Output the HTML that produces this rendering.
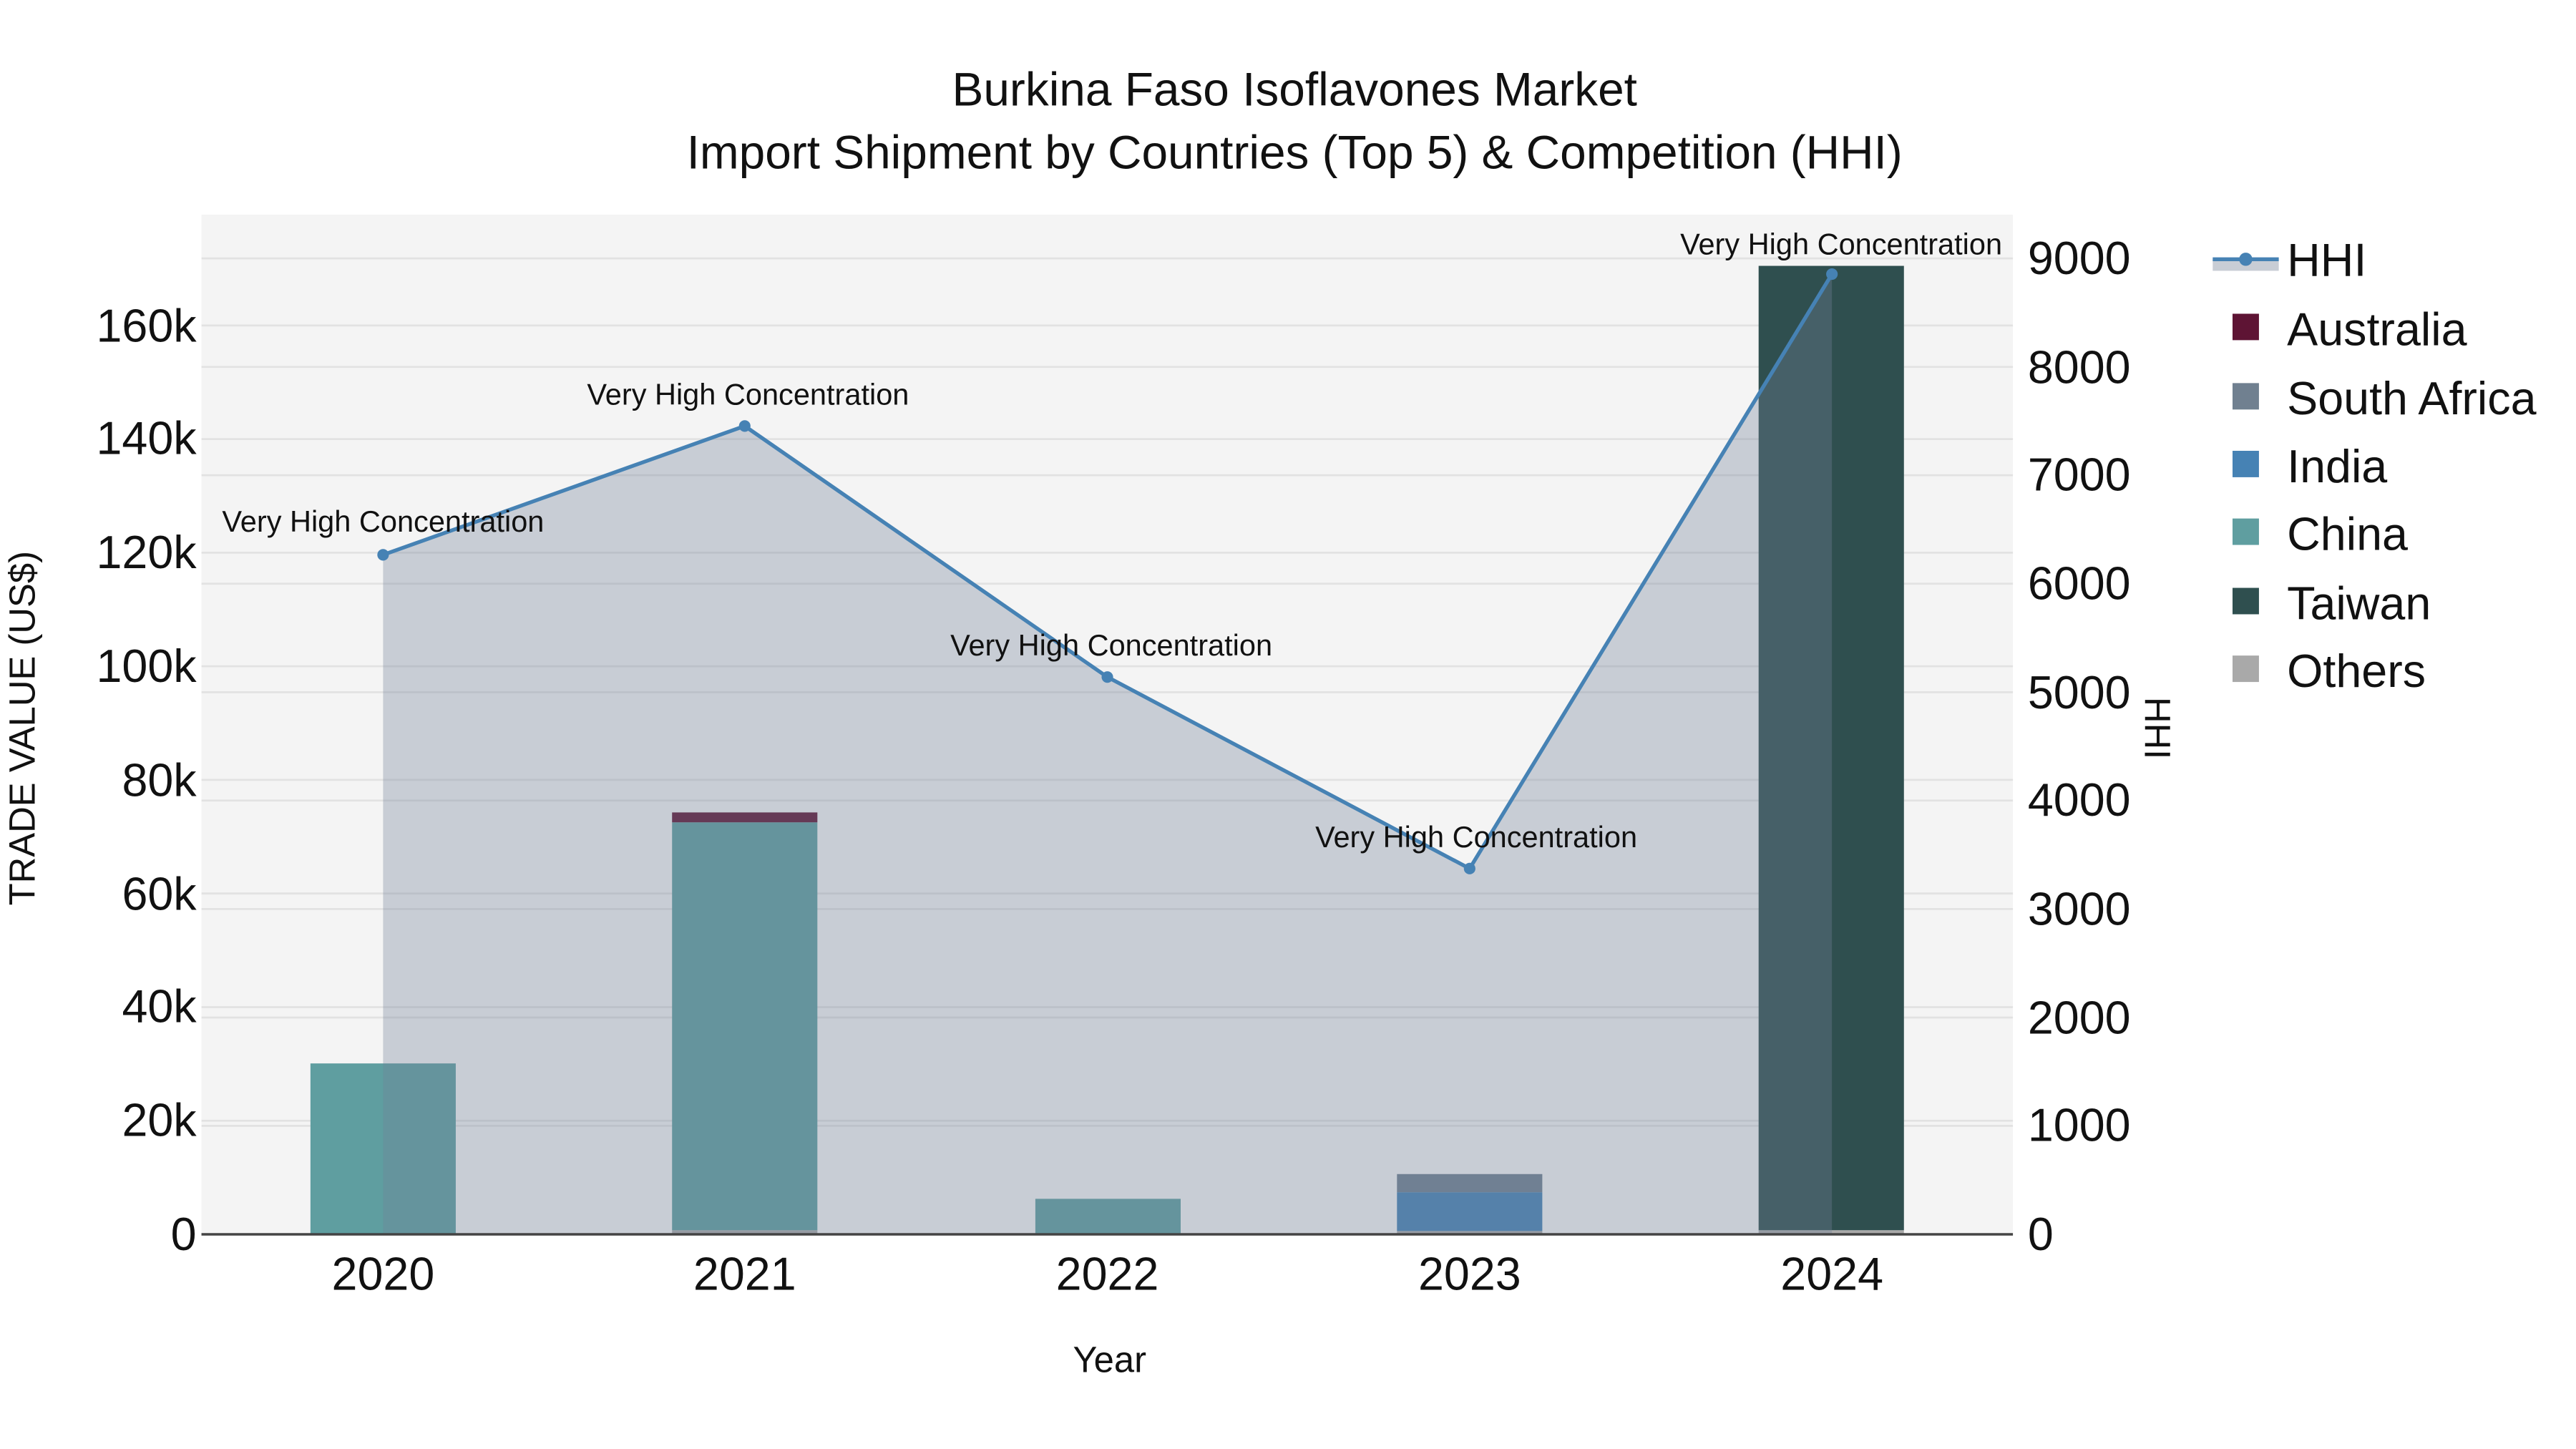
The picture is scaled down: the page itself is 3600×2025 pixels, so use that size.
<!DOCTYPE html>
<html><head><meta charset="utf-8"><style>html,body{margin:0;padding:0;background:#fff}svg{display:block}</style></head><body>
<svg width="3600" height="2025" viewBox="0 0 1560 877.5" xmlns="http://www.w3.org/2000/svg" font-family="Liberation Sans, Arial, sans-serif">
<rect x="0" y="0" width="1560" height="877.5" fill="#fff"/>
<rect x="122" y="130" width="1097" height="617.5" fill="#f4f4f4"/>
<g stroke="#e2e2e2" stroke-width="1.2">
<line x1="122" x2="1219" y1="678.7" y2="678.7"/><line x1="122" x2="1219" y1="609.9" y2="609.9"/><line x1="122" x2="1219" y1="541.1" y2="541.1"/><line x1="122" x2="1219" y1="472.3" y2="472.3"/><line x1="122" x2="1219" y1="403.5" y2="403.5"/><line x1="122" x2="1219" y1="334.7" y2="334.7"/><line x1="122" x2="1219" y1="265.9" y2="265.9"/><line x1="122" x2="1219" y1="197.1" y2="197.1"/>
<line x1="122" x2="1219" y1="681.8" y2="681.8"/><line x1="122" x2="1219" y1="616.2" y2="616.2"/><line x1="122" x2="1219" y1="550.5" y2="550.5"/><line x1="122" x2="1219" y1="484.8" y2="484.8"/><line x1="122" x2="1219" y1="419.2" y2="419.2"/><line x1="122" x2="1219" y1="353.5" y2="353.5"/><line x1="122" x2="1219" y1="287.8" y2="287.8"/><line x1="122" x2="1219" y1="222.2" y2="222.2"/><line x1="122" x2="1219" y1="156.5" y2="156.5"/>
</g>
<rect x="188" y="644" width="88" height="103.5" fill="#5f9ea0"/>
<rect x="407" y="745" width="88" height="2.5" fill="#a9a9a9"/>
<rect x="407" y="498" width="88" height="247" fill="#5f9ea0"/>
<rect x="407" y="492" width="88" height="6" fill="#5e1434"/>
<rect x="627" y="726" width="88" height="21.5" fill="#5f9ea0"/>
<rect x="846" y="745.5" width="88" height="2" fill="#a9a9a9"/>
<rect x="846" y="722" width="88" height="23.5" fill="#4682b4"/>
<rect x="846" y="711" width="88" height="11" fill="#708090"/>
<rect x="1065" y="745" width="88" height="2.5" fill="#a9a9a9"/>
<rect x="1065" y="161" width="88" height="584" fill="#2f4f4f"/>
<polygon points="232,336 451,258 670.6,410 890,526 1109.4,166 1109.4,747.5 232,747.5" fill="rgb(115,129,153)" fill-opacity="0.34"/>
<line x1="122" x2="1219" y1="747.5" y2="747.5" stroke="#444" stroke-width="1.5"/>
<polyline points="232,336 451,258 670.6,410 890,526 1109.4,166" fill="none" stroke="#4682b4" stroke-width="2.3"/>
<g fill="#4682b4"><circle cx="232" cy="336" r="3.5"/><circle cx="451" cy="258" r="3.5"/><circle cx="670.6" cy="410" r="3.5"/><circle cx="890" cy="526" r="3.5"/><circle cx="1109.4" cy="166" r="3.5"/></g>
<g font-size="18" text-anchor="middle" fill="#111">
<text x="232" y="322">Very High Concentration</text>
<text x="453" y="245">Very High Concentration</text>
<text x="673" y="397">Very High Concentration</text>
<text x="894" y="513">Very High Concentration</text>
<text x="1115" y="154">Very High Concentration</text>
</g>
<g font-size="28" text-anchor="end" fill="#111">
<text x="119" y="757">0</text><text x="119" y="688">20k</text><text x="119" y="619">40k</text><text x="119" y="551">60k</text><text x="119" y="482">80k</text><text x="119" y="413">100k</text><text x="119" y="344">120k</text><text x="119" y="275">140k</text><text x="119" y="207">160k</text>
</g>
<g font-size="28" fill="#111">
<text x="1228" y="757">0</text><text x="1228" y="691">1000</text><text x="1228" y="626">2000</text><text x="1228" y="560">3000</text><text x="1228" y="494">4000</text><text x="1228" y="429">5000</text><text x="1228" y="363">6000</text><text x="1228" y="297">7000</text><text x="1228" y="232">8000</text><text x="1228" y="166">9000</text>
</g>
<g font-size="28" text-anchor="middle" fill="#111">
<text x="232" y="781">2020</text><text x="451" y="781">2021</text><text x="670.6" y="781">2022</text><text x="890" y="781">2023</text><text x="1109.4" y="781">2024</text>
</g>
<text x="672" y="831" font-size="22" text-anchor="middle" fill="#111">Year</text>
<text transform="translate(21,441) rotate(-90)" font-size="22" text-anchor="middle" fill="#111">TRADE VALUE (US$)</text>
<text transform="translate(1299,441) rotate(90)" font-size="22" text-anchor="middle" fill="#111">HHI</text>
<g font-size="28.5" text-anchor="middle" fill="#111">
<text x="784" y="64">Burkina Faso Isoflavones Market</text>
<text x="784" y="102">Import Shipment by Countries (Top 5) &amp; Competition (HHI)</text>
</g>
<rect x="1340" y="157" width="40" height="7" fill="#c8cdd5"/>
<line x1="1340" x2="1380" y1="157" y2="157" stroke="#4682b4" stroke-width="2.3"/>
<circle cx="1360" cy="157" r="4" fill="#4682b4"/>
<rect x="1352" y="190" width="16" height="16" fill="#5e1434"/>
<rect x="1352" y="232" width="16" height="16" fill="#708090"/>
<rect x="1352" y="273" width="16" height="16" fill="#4682b4"/>
<rect x="1352" y="314" width="16" height="16" fill="#5f9ea0"/>
<rect x="1352" y="356" width="16" height="16" fill="#2f4f4f"/>
<rect x="1352" y="397" width="16" height="16" fill="#a9a9a9"/>
<g font-size="28" fill="#111">
<text x="1385" y="167">HHI</text><text x="1385" y="209">Australia</text><text x="1385" y="251">South Africa</text><text x="1385" y="292">India</text><text x="1385" y="333">China</text><text x="1385" y="375">Taiwan</text><text x="1385" y="416">Others</text>
</g>
</svg>
</body></html>
